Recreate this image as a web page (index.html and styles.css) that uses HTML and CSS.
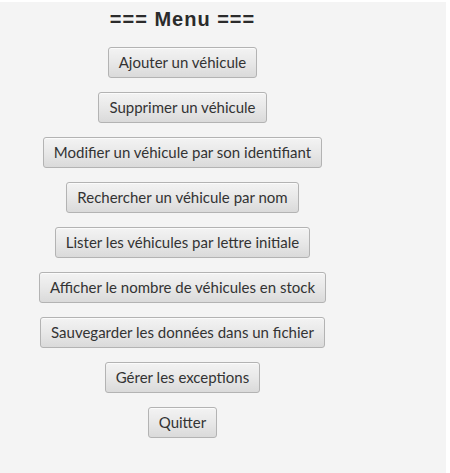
FILE: index.html
```html
<!DOCTYPE html>
<html lang="fr">
<head>
<meta charset="utf-8">
<title>Menu</title>
<link rel="stylesheet" href="styles.css">
</head>
<body>
<div class="window">
  <div class="menu">
    <h1 class="title">=== Menu ===</h1>
    <div class="buttons">
      <button class="btn">Ajouter un véhicule</button>
      <button class="btn">Supprimer un véhicule</button>
      <button class="btn">Modifier un véhicule par son identifiant</button>
      <button class="btn">Rechercher un véhicule par nom</button>
      <button class="btn">Lister les véhicules par lettre initiale</button>
      <button class="btn">Afficher le nombre de véhicules en stock</button>
      <button class="btn">Sauvegarder les données dans un fichier</button>
      <button class="btn">Gérer les exceptions</button>
      <button class="btn">Quitter</button>
    </div>
  </div>
</div>
</body>
</html>
```

FILE: styles.css
```css
html, body {
  margin: 0;
  padding: 0;
  background: #ffffff;
}
body {
  width: 450px;
  height: 473px;
  overflow: hidden;
}
.window {
  margin-top: 2px;
  width: 446px;
  height: 471px;
  background: #f4f4f4;
}
.menu {
  width: 365px;
  display: flex;
  flex-direction: column;
  align-items: center;
}
.title {
  margin: 6px 0 0 0;
  font-family: "Liberation Sans", Arial, sans-serif;
  font-weight: bold;
  font-size: 20px;
  line-height: 22px;
  color: #2b2b2b;
  letter-spacing: 1px;
}
.buttons {
  margin-top: 17px;
  display: flex;
  flex-direction: column;
  align-items: center;
  gap: 14px;
}
.btn {
  font-family: Lato, "Open Sans", sans-serif;
  font-size: 15px;
  line-height: 19px;
  color: #333333;
  padding: 5px 10px;
  border: 1px solid #b3b3b3;
  border-radius: 3px;
  background: linear-gradient(to bottom, #f3f3f3 0%, #e8e8e8 50%, #dadada 100%);
  box-shadow: inset 0 1px 0 #fbfbfb;
  cursor: pointer;
}
```
